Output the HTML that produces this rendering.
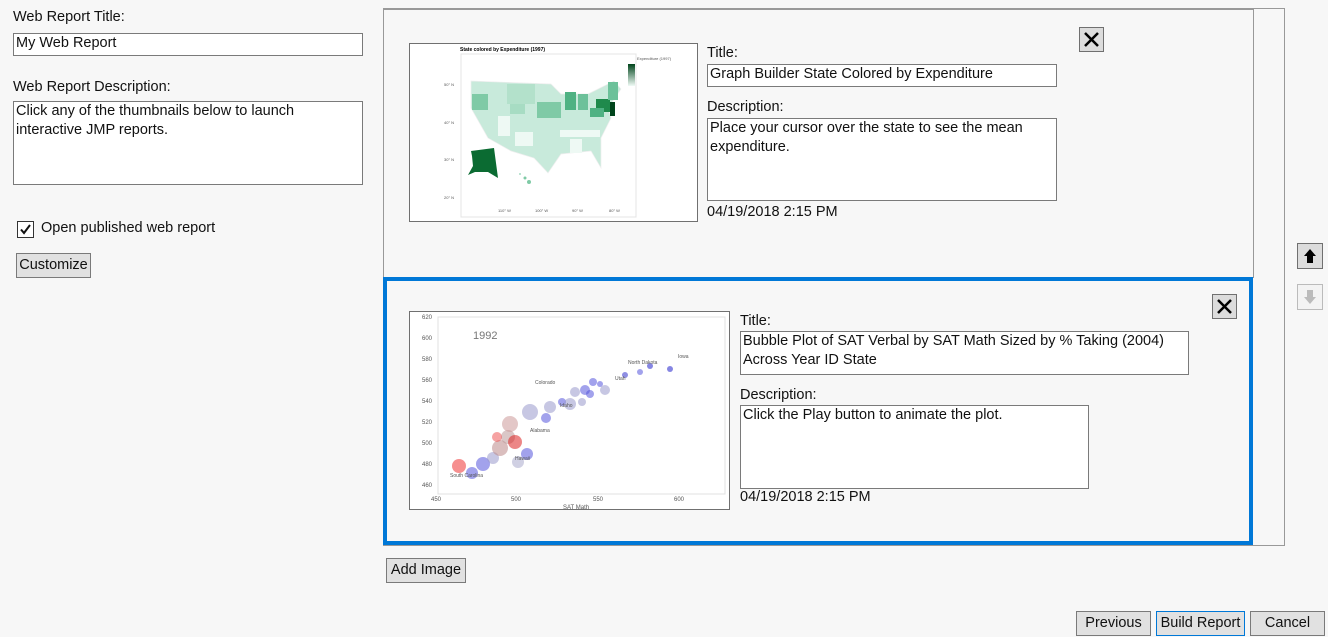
<!DOCTYPE html>
<html><head><meta charset="utf-8"><style>
body{margin:0;width:1328px;height:637px;background:#f7f7f7;font-family:"Liberation Sans",sans-serif;font-size:14.5px;color:#111;position:relative;overflow:hidden}
.a{position:absolute;white-space:nowrap}
.box{position:absolute;background:#fff;border:1px solid #7a7a7a;box-sizing:border-box;padding:0 2px;line-height:19px;white-space:nowrap}
.btn{position:absolute;background:#e1e1e1;border:1px solid #7a7a7a;box-sizing:border-box;text-align:center;line-height:22px}
.xb{position:absolute;width:25px;height:25px;background:#dcdcdc;border:1px solid #707070;box-sizing:border-box}
</style></head><body>
<div class="a" style="left:13px;top:9px">Web Report Title:</div>
<div class="box" style="left:13px;top:33px;width:350px;height:23px;line-height:19px">My Web Report</div>
<div class="a" style="left:13px;top:79px">Web Report Description:</div>
<div class="box" style="left:13px;top:101px;width:350px;height:84px">Click any of the thumbnails below to launch<br>interactive JMP reports.</div>
<div style="position:absolute;left:17px;top:221px;width:17px;height:17px;border:1px solid #333;box-sizing:border-box;background:#fff"><svg width="15" height="15" style="position:absolute;left:0;top:0"><path d="M3 7.5 L6 11 L12 3" stroke="#111" stroke-width="2" fill="none"/></svg></div>
<div class="a" style="left:41px;top:220px">Open published web report</div>
<div class="btn" style="left:16px;top:253px;width:75px;height:25px">Customize</div>

<div style="position:absolute;left:383px;top:8px;width:902px;height:538px;border:1px solid #999;border-left:none;box-sizing:border-box"></div>
<div style="position:absolute;left:383px;top:8px;width:871px;height:270px;border:1px solid #999;border-top:2px solid #999;box-sizing:border-box"></div>
<div style="position:absolute;left:383px;top:277px;width:870px;height:268px;border:4px solid #0078d7;box-sizing:border-box"></div>

<!-- map thumbnail -->
<div style="position:absolute;left:409px;top:43px;width:289px;height:179px;border:1px solid #707070;box-sizing:border-box;background:#fff">
<svg width="287" height="177" style="font-family:'Liberation Sans',sans-serif">
<text x="50" y="7" font-size="5" font-weight="bold">State colored by Expenditure (1997)</text>
<rect x="51" y="10" width="175" height="163" fill="none" stroke="#e4e4e4"/>
<text x="227" y="16" font-size="4" fill="#555">Expenditure (1997)</text>
<rect x="218" y="20" width="7" height="22" fill="url(#g)"/>
<defs><linearGradient id="g" x1="0" y1="0" x2="0" y2="1"><stop offset="0" stop-color="#00441b"/><stop offset="1" stop-color="#f0fbf6"/></linearGradient></defs>
<g font-size="4" fill="#555"><text x="34" y="42">50° N</text><text x="34" y="80">40° N</text><text x="34" y="117">30° N</text><text x="34" y="155">20° N</text>
<text x="88" y="168">110° W</text><text x="125" y="168">100° W</text><text x="162" y="168">90° W</text><text x="199" y="168">80° W</text></g>
<path d="M61 37 L141 40 L151 50 L178 50 L204 37 L211 45 L198 64 L201 74 L191 94 L191 124 L181 107 L151 110 L138 129 L124 114 L101 107 L78 94 L61 64 Z" fill="#c8eadb" stroke="#eee" stroke-width="0.7"/>
<rect x="97" y="40" width="28" height="20" fill="#b3e1cb"/><rect x="88" y="72" width="12" height="20" fill="#eef9f4"/>
<rect x="62" y="50" width="16" height="16" fill="#7fcaa6"/><rect x="127" y="58" width="24" height="16" fill="#7fcaa6"/>
<rect x="155" y="48" width="11" height="18" fill="#4fb283"/><rect x="168" y="50" width="10" height="16" fill="#6cc19a"/>
<rect x="186" y="55" width="14" height="13" fill="#1f8a4c"/><rect x="198" y="38" width="10" height="18" fill="#6cc19a"/>
<rect x="200" y="58" width="5" height="14" fill="#00441b"/><rect x="180" y="64" width="14" height="9" fill="#4fb283"/>
<rect x="105" y="88" width="18" height="14" fill="#eef9f4"/><rect x="150" y="86" width="40" height="7" fill="#eef9f4"/>
<rect x="160" y="95" width="12" height="14" fill="#eef9f4"/><rect x="100" y="60" width="15" height="10" fill="#a7dcc3"/>
<path d="M61 107 L84 104 L88 134 L78 128 L65 128 L58 131 L63 122 L62 112 Z" fill="#0b6b32"/>
<circle cx="115" cy="134" r="1.5" fill="#7fcaa6"/><circle cx="110" cy="130" r="1" fill="#a7dcc3"/><circle cx="119" cy="138" r="2" fill="#7fcaa6"/>
</svg></div>
<div class="a" style="left:707px;top:45px">Title:</div>
<div class="box" style="left:707px;top:64px;width:350px;height:23px">Graph Builder State Colored by Expenditure</div>
<div class="a" style="left:707px;top:99px">Description:</div>
<div class="box" style="left:707px;top:118px;width:350px;height:83px">Place your cursor over the state to see the mean<br>expenditure.</div>
<div class="a" style="left:707px;top:204px">04/19/2018 2:15 PM</div>
<div class="xb" style="left:1079px;top:27px"><svg width="23" height="23"><path d="M5 5 L18 18 M18 5 L5 18" stroke="#000" stroke-width="2.5"/></svg></div>

<!-- scatter thumbnail -->
<div style="position:absolute;left:409px;top:311px;width:321px;height:199px;border:1px solid #707070;box-sizing:border-box;background:#fff">
<svg width="319" height="197" style="font-family:'Liberation Sans',sans-serif">
<rect x="28" y="5" width="287" height="177" fill="none" stroke="#e0e0e0"/>
<g font-size="6" fill="#555"><text x="12" y="7">620</text><text x="12" y="28">600</text><text x="12" y="49">580</text><text x="12" y="70">560</text><text x="12" y="91">540</text><text x="12" y="112">520</text><text x="12" y="133">500</text><text x="12" y="154">480</text><text x="12" y="175">460</text>
<text x="21" y="189">450</text><text x="101" y="189">500</text><text x="183" y="189">550</text><text x="264" y="189">600</text><text x="153" y="197">SAT Math</text></g>
<text x="63" y="27" font-size="11" fill="#777">1992</text>
<g fill-opacity="0.55">
<circle cx="49" cy="154" r="7" fill="#e33"/><circle cx="62" cy="161" r="6" fill="#55d"/><circle cx="73" cy="152" r="7" fill="#55d"/>
<circle cx="83" cy="146" r="6" fill="#99c"/><circle cx="90" cy="136" r="8" fill="#b88"/><circle cx="98" cy="125" r="7" fill="#b99"/>
<circle cx="105" cy="130" r="7" fill="#d22"/><circle cx="100" cy="112" r="8" fill="#c99"/><circle cx="120" cy="100" r="8" fill="#99c"/>
<circle cx="108" cy="150" r="6" fill="#aac"/><circle cx="117" cy="142" r="6" fill="#55d"/><circle cx="136" cy="106" r="5" fill="#55d"/>
<circle cx="152" cy="90" r="4" fill="#55d"/><circle cx="160" cy="92" r="6" fill="#99c"/><circle cx="175" cy="78" r="5" fill="#55d"/>
<circle cx="183" cy="70" r="4" fill="#55d"/><circle cx="190" cy="72" r="3" fill="#55d"/><circle cx="195" cy="78" r="5" fill="#99c"/>
<circle cx="172" cy="90" r="4" fill="#99c"/><circle cx="240" cy="54" r="3" fill="#22c"/><circle cx="260" cy="57" r="3" fill="#22c"/>
<circle cx="215" cy="63" r="3" fill="#33c"/><circle cx="230" cy="60" r="3" fill="#55d"/><circle cx="87" cy="125" r="5" fill="#e55"/>
<circle cx="140" cy="95" r="6" fill="#99c"/><circle cx="165" cy="80" r="5" fill="#99c"/><circle cx="180" cy="82" r="4" fill="#55d"/>
</g>
<g font-size="5" fill="#555"><text x="218" y="52">North Dakota</text><text x="268" y="46">Iowa</text><text x="205" y="68">Utah</text><text x="105" y="148">Hawaii</text><text x="120" y="120">Alabama</text><text x="40" y="165">South Carolina</text><text x="150" y="95">Idaho</text><text x="125" y="72">Colorado</text></g>
</svg></div>
<div class="a" style="left:740px;top:313px">Title:</div>
<div class="box" style="left:740px;top:331px;width:449px;height:44px;line-height:19px">Bubble Plot of SAT Verbal by SAT Math Sized by % Taking (2004)<br>Across Year ID State</div>
<div class="a" style="left:740px;top:387px">Description:</div>
<div class="box" style="left:740px;top:405px;width:349px;height:84px">Click the Play button to animate the plot.</div>
<div class="a" style="left:740px;top:489px">04/19/2018 2:15 PM</div>
<div class="xb" style="left:1212px;top:294px"><svg width="23" height="23"><path d="M5 5 L18 18 M18 5 L5 18" stroke="#000" stroke-width="2.5"/></svg></div>

<div class="xb" style="left:1297px;top:243px;width:26px;height:26px"><svg width="24" height="24"><path d="M12 5 L18 12 L15 12 L15 19 L9 19 L9 12 L6 12 Z" fill="#000"/></svg></div>
<div class="xb" style="left:1297px;top:284px;width:26px;height:26px;background:#f3f3f3;border-color:#bbb"><svg width="24" height="24"><path d="M12 19 L18 12 L15 12 L15 5 L9 5 L9 12 L6 12 Z" fill="#bbb"/></svg></div>

<div class="btn" style="left:386px;top:558px;width:80px;height:25px">Add Image</div>
<div class="btn" style="left:1076px;top:611px;width:75px;height:25px">Previous</div>
<div class="btn" style="left:1156px;top:611px;width:89px;height:25px;border-color:#0078d7">Build Report</div>
<div class="btn" style="left:1250px;top:611px;width:75px;height:25px">Cancel</div>
</body></html>
